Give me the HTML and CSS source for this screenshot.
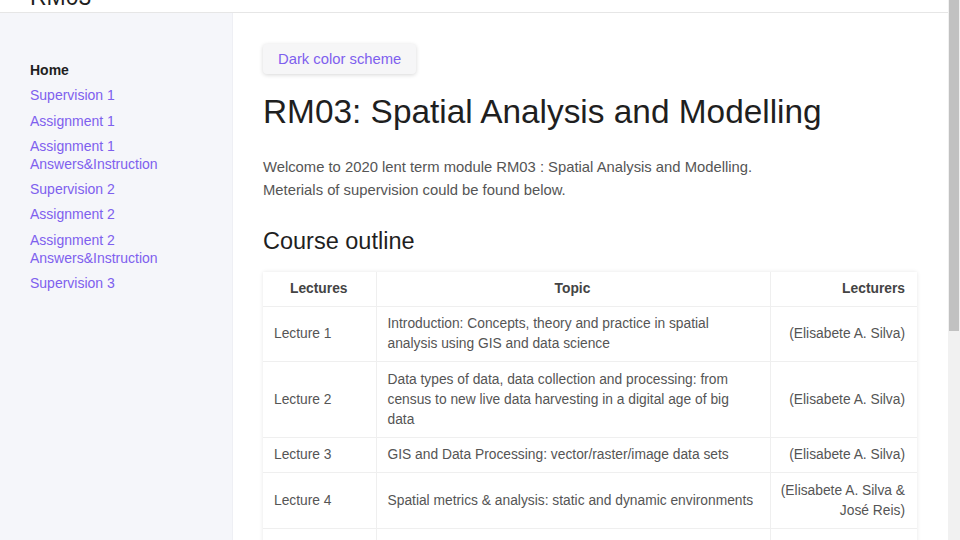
FILE: index.html
```html
<!DOCTYPE html>
<html lang="en">
<head>
<meta charset="utf-8">
<title>RM03: Spatial Analysis and Modelling</title>
<link rel="stylesheet" href="styles.css">
</head>
<body>
<div class="screen">
  <div class="app">
    <header class="topbar">
      <div class="site-title">RM03</div>
    </header>
    <div class="layout">
      <nav class="sidebar">
        <ul class="nav">
          <li class="nav-item active">Home</li>
          <li class="nav-item"><a href="#">Supervision 1</a></li>
          <li class="nav-item"><a href="#">Assignment 1</a></li>
          <li class="nav-item"><a href="#">Assignment 1<br>Answers&amp;Instruction</a></li>
          <li class="nav-item"><a href="#">Supervision 2</a></li>
          <li class="nav-item"><a href="#">Assignment 2</a></li>
          <li class="nav-item"><a href="#">Assignment 2<br>Answers&amp;Instruction</a></li>
          <li class="nav-item"><a href="#">Supervision 3</a></li>
        </ul>
      </nav>
      <main class="main">
        <div class="toolbar"><button class="scheme-btn" type="button">Dark color scheme</button></div>
        <h1 class="title">RM03: Spatial Analysis and Modelling</h1>
        <p class="intro">Welcome to 2020 lent term module RM03 : Spatial Analysis and Modelling.<br>Meterials of supervision could be found below.</p>
        <h2 class="section">Course outline</h2>
        <table class="outline">
          <colgroup>
            <col class="c-lec">
            <col class="c-topic">
            <col class="c-who">
          </colgroup>
          <thead>
            <tr><th class="center">Lectures</th><th class="center">Topic</th><th class="right">Lecturers</th></tr>
          </thead>
          <tbody>
            <tr><td>Lecture 1</td><td>Introduction: Concepts, theory and practice in spatial analysis using GIS and data science</td><td class="right">(Elisabete A. Silva)</td></tr>
            <tr><td>Lecture 2</td><td>Data types of data, data collection and processing: from census to new live data harvesting in a digital age of big data</td><td class="right">(Elisabete A. Silva)</td></tr>
            <tr><td>Lecture 3</td><td>GIS and Data Processing: vector/raster/image data sets</td><td class="right">(Elisabete A. Silva)</td></tr>
            <tr><td>Lecture 4</td><td>Spatial metrics &amp; analysis: static and dynamic environments</td><td class="right">(Elisabete A. Silva &amp; José Reis)</td></tr>
            <tr><td>&nbsp;</td><td>&nbsp;</td><td class="right">&nbsp;</td></tr>
          </tbody>
        </table>
      </main>
    </div>
  </div>
  <div class="scrollbar"><div class="thumb"></div></div>
</div>
</body>
</html>
```
FILE: styles.css
```css
* { box-sizing: border-box; }

html, body {
  margin: 0;
  padding: 0;
  height: 540px;
  overflow: hidden;
  background: #ffffff;
  font-family: "Liberation Sans", Arial, sans-serif;
}

.screen {
  display: flex;
  width: 960px;
  height: 540px;
}

.app {
  flex: 1;
  display: flex;
  flex-direction: column;
  min-width: 0;
}

.topbar {
  height: 13px;
  border-bottom: 1px solid #e6e6e6;
  background: #ffffff;
  display: flex;
  align-items: flex-end;
  padding: 0 0 3px 30px;
  overflow: hidden;
  flex: none;
}

.site-title {
  font-size: 23px;
  line-height: 24px;
  color: #1e1e1e;
  flex: none;
}

.layout {
  flex: 1;
  display: flex;
  min-height: 0;
}

.sidebar {
  width: 233px;
  flex: none;
  background: #f5f6fa;
  border-right: 1px solid #eeeff4;
  padding: 48px 0 0 30px;
}

.nav {
  list-style: none;
  margin: 0;
  padding: 0;
  display: flex;
  flex-direction: column;
  gap: 7.3px;
}

.nav-item {
  font-size: 14px;
  line-height: 18px;
  color: #7e60ee;
}

.nav-item.active {
  font-weight: bold;
  color: #1f1f1f;
}

.nav-item a {
  color: #7e60ee;
  text-decoration: none;
}

.main {
  flex: 1;
  min-width: 0;
  padding: 31px 31px 0 30px;
  color: #555555;
}

.toolbar {
  display: flex;
}

.scheme-btn {
  font-family: "Liberation Sans", Arial, sans-serif;
  font-size: 14.8px;
  line-height: 18px;
  color: #7e60ee;
  background: #f6f6f7;
  border: none;
  border-radius: 4px;
  padding: 6px 15px;
  box-shadow: 0 1px 4px rgba(0, 0, 0, 0.16);
}

.title {
  font-size: 33.4px;
  line-height: 1.2;
  font-weight: normal;
  color: #1f1f1f;
  margin: 17.5px 0 24.5px;
}

.intro {
  font-size: 14.8px;
  line-height: 22.5px;
  color: #555555;
  margin: 0 0 26px;
}

.section {
  font-size: 23.5px;
  line-height: 1.2;
  font-weight: normal;
  color: #1f1f1f;
  margin: 0 0 16.5px;
}

.outline {
  width: 654px;
  border-collapse: collapse;
  table-layout: fixed;
  box-shadow: 0 0 4px rgba(0, 0, 0, 0.1);
  font-size: 13.8px;
  line-height: 20px;
  color: #555555;
}

.c-lec { width: 113px; }
.c-topic { width: 394px; }
.c-who { width: 147px; }

.outline th,
.outline td {
  padding: 7px 12px 7px 11px;
  border: 1px solid #efefef;
  vertical-align: middle;
  text-align: left;
}

.outline td {
  padding-top: 7.25px;
  padding-bottom: 7.25px;
}

.outline th {
  font-weight: bold;
  color: #444444;
  border-top: none;
}

.outline tr > :first-child { border-left: none; }
.outline tr > :last-child { border-right: none; }

.outline .center { text-align: center; }
.outline .right {
  text-align: right;
  padding-left: 6px;
}

.scrollbar {
  width: 12px;
  flex: none;
  background: #f1f1f1;
  padding: 0 1px 0 1px;
}

.thumb {
  height: 331px;
  background: #c1c1c1;
}
```
